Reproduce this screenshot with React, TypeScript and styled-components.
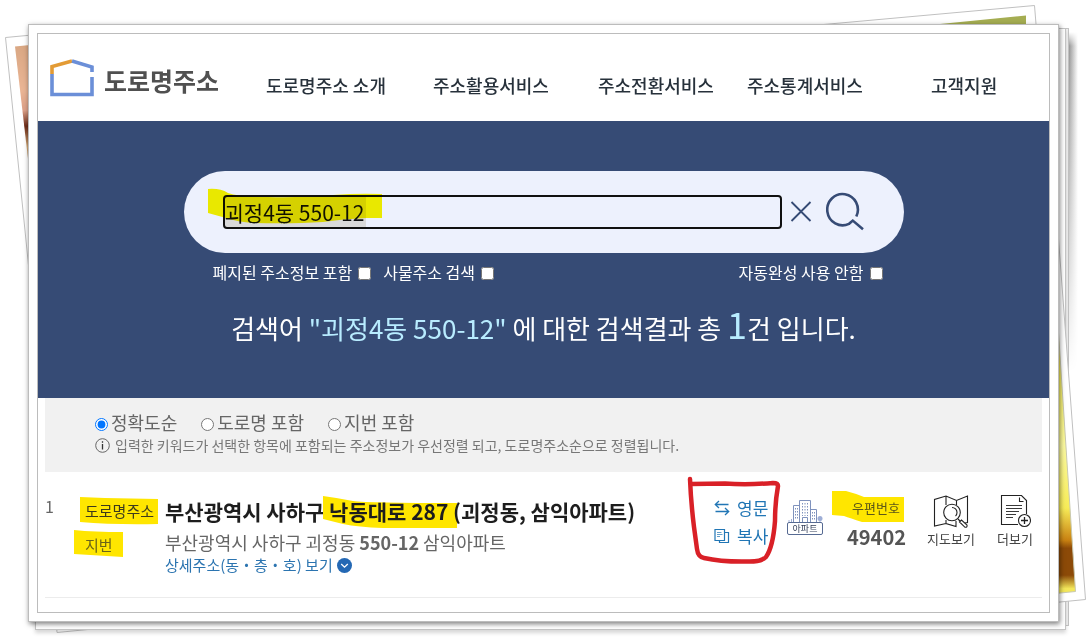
import React, { useState } from "react";
import styled, { createGlobalStyle } from "styled-components";

const GlobalStyle = createGlobalStyle`
  *, *::before, *::after { box-sizing: border-box; }
  body {
    margin: 0;
    background: #fff;
    font-family: "Noto Sans CJK KR", "Noto Sans", sans-serif;
    color: #222;
  }
  h1, p, ul { margin: 0; padding: 0; font-weight: 400; }
  button { font: inherit; color: inherit; border: 0; padding: 0; background: none; cursor: pointer; }
  a { color: inherit; text-decoration: none; }
`;

/* ---------- photo stack ---------- */

const Stage = styled.div`
  position: relative;
  isolation: isolate;
  overflow: hidden;
  padding: 24px 32px 16px 28px;
`;

const BackSheet = styled.div<{ $front?: boolean }>`
  position: absolute;
  z-index: -1;
  top: 28px;
  left: 35px;
  right: ${(p) => (p.$front ? 25 : 22)}px;
  bottom: ${(p) => (p.$front ? 8 : 12)}px;
  background: ${(p) => (p.$front ? "#fff" : "#f0f0f0")};
  border: 1px solid #c4c4c4;
  box-shadow: ${(p) => (p.$front ? "0 3px 4px rgba(0,0,0,.16)" : "none")};
`;

const Shade = styled.div`
  position: absolute;
  z-index: -1;
  top: 32px;
  right: 13px;
  width: 10px;
  height: 340px;
  background: linear-gradient(90deg, #8c8c8c, #fff);
  mask-image: linear-gradient(transparent, #000 14px, transparent);
`;

const Photo = styled.svg<{ $side: "left" | "right" }>`
  position: absolute;
  z-index: -1;
  top: 0;
  ${(p) => p.$side}: 0;
`;

const Frame = styled.div`
  padding: 8px;
  border: 1px solid #bcbcbc;
  background: #fff;
  box-shadow: 1px 2px 5px rgba(0, 0, 0, 0.5);
`;

const Page = styled.div`
  border: 1px solid #bcbcbc;
  padding-bottom: 14px;
`;

/* ---------- header ---------- */

const Header = styled.header`
  display: grid;
  grid-template-columns: 216px 1fr;
  height: 87px;
  padding-left: 12px;
`;

const Brand = styled.a`
  display: flex;
  gap: 9px;
  padding-top: 25px;
  font-size: 25px;
  font-weight: 700;
  line-height: 42px;
  color: #505050;
  white-space: nowrap;
`;

const Nav = styled.nav`
  display: grid;
  grid-template-columns: 167fr 165fr 149fr 184fr 118fr;
  padding-top: 39px;
  font-size: 18px;
  font-weight: 500;
  line-height: 25px;
  white-space: nowrap;
  color: #27313b;
`;

/* ---------- search ---------- */

const Hero = styled.section`
  display: flex;
  flex-direction: column;
  align-items: center;
  height: 277px;
  padding-top: 50px;
  background: #364b75;
  color: #fff;
`;

const SearchBar = styled.form`
  position: relative;
  isolation: isolate;
  display: flex;
  align-items: center;
  width: 720px;
  max-width: 100%;
  height: 82px;
  padding: 0 38px 0 39px;
  border-radius: 41px;
  background: #edf1fd;
  color: #364b75;
`;

const SearchInput = styled.input`
  flex: 1;
  min-width: 0;
  height: 34px;
  padding: 0;
  border: 2px solid #101010;
  border-radius: 4px;
  outline: 0;
  background: linear-gradient(#d9d9d9, #d9d9d9) 0 0 / 141px 100% no-repeat #edf1fd;
  font: 21px/30px "Noto Sans CJK KR", sans-serif;
  color: #111;
`;

const IconButton = styled.button<{ $gap: number }>`
  display: flex;
  margin-left: ${(p) => p.$gap}px;
`;

const Options = styled.div`
  display: flex;
  gap: 12px;
  width: 720px;
  max-width: 100%;
  padding: 7px 21px 0 29px;
  font-size: 16px;
  line-height: 24px;
  white-space: nowrap;
`;

const Check = styled.label<{ $end?: boolean }>`
  display: flex;
  align-items: center;
  gap: 6px;
  margin-left: ${(p) => (p.$end ? "auto" : "0")};
  input { margin: 2px 0 0; width: 13px; height: 13px; }
`;

const Summary = styled.h1`
  padding-top: 15px;
  font-size: 26px;
  line-height: 48px;
  white-space: nowrap;
  em { font-style: normal; color: #b8ecff; }
`;

const Count = styled.em`
  font-size: 36px;
`;

/* ---------- sorting ---------- */

const SortBand = styled.section`
  height: 74px;
  margin: 0 7px;
  padding: 13px 0 0 50px;
  background: #f1f1f1;
  color: #666;
  white-space: nowrap;
`;

const SortList = styled.div`
  display: flex;
  gap: 24px;
`;

const Radio = styled.label`
  display: flex;
  align-items: center;
  gap: 3px;
  font-size: 18px;
  line-height: 23px;
  input { margin: 3px 0 0; width: 13px; height: 13px; }
`;

const Hint = styled.p`
  display: flex;
  align-items: center;
  gap: 5px;
  font-size: 14px;
  line-height: 22px;
  color: #777;
`;

/* ---------- result row ---------- */

const Result = styled.article`
  display: grid;
  grid-template-columns: 40px 80px 1fr 73px 60px 80px 70px 45px;
  height: 126px;
  margin: 0 7px;
  padding-top: 22px;
  border-bottom: 1px solid #ececec;
  white-space: nowrap;
`;

const Index = styled.span`
  font-size: 16px;
  line-height: 24px;
  color: #666;
`;

const Labels = styled.div`
  padding-top: 2px;
  font-size: 15px;
  line-height: 30px;
  color: #3d3a1c;
  span { display: block; width: max-content; }
  span + span { margin-top: 4px; color: #6b6518; }
`;

const Address = styled.div`
  padding-top: 2px;
  color: #666;
`;

const Road = styled.p`
  font-size: 21px;
  font-weight: 700;
  line-height: 30px;
  color: #1d1d1d;
`;

const Lot = styled.p`
  padding-top: 4px;
  font-size: 18px;
  line-height: 24px;
`;

const Detail = styled.button`
  display: flex;
  align-items: center;
  gap: 4px;
  font-size: 15px;
  line-height: 22px;
  color: #2b74b0;
`;

const Marked = styled.span`
  position: relative;
  isolation: isolate;
`;

/* hand-drawn highlighter stroke lying under or over a word */
const Ink = styled.svg<{ $x: number; $y: number; $over?: boolean }>`
  position: absolute;
  left: ${(p) => p.$x}px;
  top: ${(p) => p.$y}px;
  z-index: ${(p) => (p.$over ? 1 : -1)};
  pointer-events: none;
  mix-blend-mode: multiply;
`;

const Actions = styled.div`
  position: relative;
  display: flex;
  flex-direction: column;
  align-items: flex-start;
  color: #2176b5;
`;

const Action = styled.button`
  display: flex;
  align-items: center;
  gap: 7px;
  font-size: 17px;
  line-height: 28px;
`;

const Building = styled.figure`
  display: flex;
  flex-direction: column;
  width: 36px;
  margin: 5px 0 0;
  svg { display: block; }
  figcaption {
    height: 13px;
    border: 1px solid #566a92;
    border-radius: 2px;
    font-size: 9px;
    line-height: 11px;
    text-align: center;
    color: #333e58;
  }
`;

const Zip = styled.div`
  width: 58px;
  padding-top: 4px;
  font-size: 13px;
  line-height: 20px;
  text-align: center;
  color: #5c5618;
  strong {
    display: block;
    padding-top: 6px;
    font-size: 20px;
    line-height: 26px;
    color: #555;
  }
`;

const Tool = styled.button`
  display: flex;
  flex-direction: column;
  align-items: center;
  align-self: start;
  justify-self: start;
  gap: 1px;
  font-size: 13px;
  line-height: 20px;
  color: #444;
`;

const LeftPhotos = () => (
  <Photo $side="left" width="200" height="638" viewBox="0 0 200 638" aria-hidden="true">
    <defs>
      <linearGradient id="skin" x1="0" y1="0" x2="0" y2="1">
        <stop offset="0" stopColor="#d9a783" />
        <stop offset=".35" stopColor="#eab595" />
        <stop offset=".5" stopColor="#dca088" />
        <stop offset=".62" stopColor="#6e2c18" />
        <stop offset=".78" stopColor="#d8ad78" />
        <stop offset="1" stopColor="#8a5f3c" />
      </linearGradient>
    </defs>
    <path d="M5.5 37.500L32 35V300Z" fill="#fff" stroke="#c0c0c0" />
    <path d="M15 46.500L30 45V176Z" fill="url(#skin)" />
    <path d="M56 618L57 632.500L175 621" fill="#fff" stroke="#c0c0c0" />
  </Photo>
);

const RightPhotos = () => (
  <Photo $side="right" width="291" height="638" viewBox="800 0 291 638" aria-hidden="true">
    <defs>
      <linearGradient id="glow" x1="0" y1="0" x2="0" y2="1">
        <stop offset="0" stopColor="#f0d038" />
        <stop offset=".2" stopColor="#f5ee60" />
        <stop offset=".45" stopColor="#fbf9a0" />
        <stop offset=".68" stopColor="#f7ec58" />
        <stop offset=".8" stopColor="#c98212" />
        <stop offset=".83" stopColor="#8c4a08" />
        <stop offset=".93" stopColor="#8c4a08" />
        <stop offset=".98" stopColor="#f3e75a" />
      </linearGradient>
    </defs>
    <path d="M818 25L1034.500 5.500L1036.500 30" fill="#fff" stroke="#c0c0c0" />
    <path d="M930 25L1026 15.500V30H930Z" fill="#a5ad52" />
    <path d="M1058 232L1085.500 599.500L1050 603" fill="#fff" stroke="#c0c0c0" />
    <path d="M1058 325L1075.500 591.500L1050 594Z" fill="url(#glow)" stroke="#c9c9b0" />
  </Photo>
);

const HIGHLIGHT = "#ffe600";

export default function App() {
  const [query, setQuery] = useState("괴정4동 550-12");
  const [sort, setSort] = useState("정확도순");

  return (
    <>
      <GlobalStyle />
      <Stage>
        <LeftPhotos />
        <Shade />
        <BackSheet />
        <BackSheet $front />
        <RightPhotos />
        <Frame>
          <Page>
            <Header>
              <Brand href="#">
                <svg width="45" height="38" viewBox="0 0 45 38" fill="none" strokeWidth="3.6" aria-hidden="true">
                  <path d="M2 15V7.500L22 2" stroke="#e39b35" />
                  <path d="M22 2L42 8V13M42 18V35.500H2V15" stroke="#6b8fd8" />
                </svg>
                도로명주소
              </Brand>
              <Nav>
                <a href="#">도로명주소 소개</a>
                <a href="#">주소활용서비스</a>
                <a href="#">주소전환서비스</a>
                <a href="#">주소통계서비스</a>
                <a href="#">고객지원</a>
              </Nav>
            </Header>

            <Hero>
              <SearchBar onSubmit={(e) => e.preventDefault()}>
                <SearchInput aria-label="주소 검색" value={query} onChange={(e) => setQuery(e.target.value)} />
                <Ink $x={24} $y={17} $over width="175" height="36" viewBox="0 0 175 36" aria-hidden="true">
                  <path
                    d="M0 1Q12 0 20 5Q32 9 60 9Q90 10 125 7Q150 5 174 6V30H158Q135 31 115 34Q85 36 45 35Q30 34 18 30L0 25Z"
                    fill="#fbf600"
                  />
                </Ink>
                <IconButton $gap={8} type="button" aria-label="지우기" onClick={() => setQuery("")}>
                  <svg width="22" height="22" viewBox="0 0 22 22" stroke="#364b75" strokeWidth="1.800">
                    <path d="M1.500 1L20.500 20M20.500 1L1.500 20" />
                  </svg>
                </IconButton>
                <IconButton $gap={14} aria-label="검색">
                  <svg width="40" height="40" viewBox="0 0 40 40" fill="none" stroke="#364b75" strokeWidth="2.600">
                    <path d="M30.300 24.500A15.300 15.600 0 1 0 23 31.800L26.800 28.600L37 37.200" />
                  </svg>
                </IconButton>
              </SearchBar>
              <Options>
                <Check>
                  폐지된 주소정보 포함 <input type="checkbox" />
                </Check>
                <Check>
                  사물주소 검색 <input type="checkbox" />
                </Check>
                <Check $end>
                  자동완성 사용 안함 <input type="checkbox" />
                </Check>
              </Options>
              <Summary>
                검색어 <em>"괴정4동 550-12"</em> 에 대한 검색결과 총 <Count>1</Count>건 입니다.
              </Summary>
            </Hero>

            <SortBand>
              <SortList role="radiogroup" aria-label="정렬">
                {["정확도순", "도로명 포함", "지번 포함"].map((name) => (
                  <Radio key={name}>
                    <input type="radio" name="sort" checked={sort === name} onChange={() => setSort(name)} />
                    {name}
                  </Radio>
                ))}
              </SortList>
              <Hint>
                <svg width="15" height="15" viewBox="0 0 15 15" fill="none" stroke="#666" aria-hidden="true">
                  <circle cx="7.500" cy="7.500" r="6.800" />
                  <path d="M7.500 6V11.500M7.500 3.300V4.800" stroke="#333" strokeWidth="1.300" />
                </svg>
                입력한 키워드가 선택한 항목에 포함되는 주소정보가 우선정렬 되고, 도로명주소순으로 정렬됩니다.
              </Hint>
            </SortBand>

            <Result>
              <Index>1</Index>
              <Labels>
                <Marked>
                  도로명주소
                  <Ink $x={-5} $y={0} width="79" height="29" viewBox="0 0 79 29" aria-hidden="true">
                    <path d="M0 1L25 2L78 3L78 28Q35 29 0 26Z" fill={HIGHLIGHT} />
                  </Ink>
                </Marked>
                <Marked>
                  지번
                  <Ink $x={-11} $y={0} width="50" height="27" viewBox="0 0 50 27" aria-hidden="true">
                    <path d="M0 0Q20 2 49 2V27L0 24Z" fill={HIGHLIGHT} />
                  </Ink>
                </Marked>
              </Labels>
              <Address>
                <Road>
                  부산광역시 사하구{" "}
                  <Marked>
                    낙동대로 287 (
                    <Ink $x={-6} $y={0} width="135" height="32" viewBox="0 0 135 32" aria-hidden="true">
                      <path d="M0 0Q15 2 30 5Q45 7 134 7V32H60Q35 31 20 28L0 23Z" fill={HIGHLIGHT} />
                    </Ink>
                  </Marked>
                  괴정동, 삼익아파트)
                </Road>
                <Lot>
                  부산광역시 사하구 괴정동 <b>550-12</b> 삼익아파트
                </Lot>
                <Detail>
                  상세주소(동・층・호) 보기
                  <svg width="15" height="15" viewBox="0 0 15 15" aria-hidden="true">
                    <circle cx="7.500" cy="7.500" r="7.500" fill="#2468b4" />
                    <path d="M4.200 6L7.500 9.200L10.800 6" fill="none" stroke="#fff" strokeWidth="1.300" />
                  </svg>
                </Detail>
              </Address>
              <Actions>
                <Action>
                  <svg width="16" height="16" viewBox="0 0 16 16" fill="none" stroke="#2176b5" strokeWidth="1.300" aria-hidden="true">
                    <path d="M14.500 4.500H1.500M5 1L1.300 4.500L5 8M1.500 11.500H14.500M11 8L14.700 11.500L11 15" />
                  </svg>
                  영문
                </Action>
                <Action>
                  <svg width="16" height="16" viewBox="0 0 16 16" fill="none" stroke="#2176b5" strokeWidth="1.200" aria-hidden="true">
                    <path d="M1 1.500H10.500V12.500H1ZM10.500 4.500H14.500V14.500H5.500V12.500" />
                    <path d="M3 4.500H7.500M3 6.500H8.500M3 8.500H6" strokeWidth=".7" />
                  </svg>
                  복사
                </Action>
                <Ink $x={-27} $y={-19} $over width="94" height="90" viewBox="0 0 94 90" aria-hidden="true">
                  <path
                    d="M3 4Q4 28 7 52L10 74Q11 82 17 83Q35 87 60 86.500Q74 87 79 82Q86 72 88 46Q88 28 91 11Q91 8 86 8Q60 10 38 8.500L4 9"
                    fill="none"
                    stroke="#d92027"
                    strokeWidth="4.500"
                    strokeLinecap="round"
                    strokeLinejoin="round"
                  />
                </Ink>
              </Actions>
              <Building>
                <svg width="36" height="23" viewBox="0 0 36 23" fill="none" stroke="#7f92bd" aria-hidden="true">
                  <path d="M6.500 23V6.500H12.500M12.500 23V1.500H23.500V23M23.500 10.500H29.500V23M15.500 23V18.500H20.500V23" />
                  <path d="M15.500 4V17M18 4V17M20.500 4V17M8.500 9V21M10.500 9V21M25.500 13V21M27.500 13V21" strokeDasharray="1.500 1.500" />
                  <path d="M33 20V23M2 21V23M4.500 20V23" stroke="#9eaed6" />
                  <circle cx="33" cy="19.500" r="2.500" fill="#9eaed6" stroke="none" />
                </svg>
                <figcaption>아파트</figcaption>
              </Building>
              <Zip>
                <Marked>
                  우편번호
                  <Ink $x={-20} $y={-7} width="73" height="32" viewBox="0 0 73 32" aria-hidden="true">
                    <path d="M0 0H14Q22 2 32 6L72 6V31H30Q18 27 12 25L0 24Z" fill={HIGHLIGHT} />
                  </Ink>
                </Marked>
                <strong>49402</strong>
              </Zip>
              <Tool>
                <svg width="36" height="34" viewBox="0 0 36 34" fill="none" stroke="#222" strokeWidth="1.100" aria-hidden="true">
                  <path d="M13 29.500L1.500 32V5.500L13 2L23.500 6.500L34.500 2V28.500L32 29M13 2V11M13 26V29.500L23 32.500V27M23.500 6.500V11" />
                  <circle cx="19" cy="18.500" r="8.300" />
                  <path d="M19 13.500A5 5 0 0 1 24 18.500Q24 21 22.500 22M25 25L27.500 27.500M26.500 28L28.500 26L34 31Q34.500 33.500 32 33.300Z" />
                </svg>
                지도보기
              </Tool>
              <Tool>
                <svg width="32" height="34" viewBox="0 0 32 34" fill="none" stroke="#222" strokeWidth="1.100" aria-hidden="true">
                  <path d="M19 30.500H2.500V1.500H22.500L27.500 6.500V20M20.500 3.500V7.500H24.500" />
                  <path d="M7 11.500H23M7 14.500H23M7 17.500H20M7 20.500H17M7 23.500H14" strokeWidth=".9" />
                  <circle cx="25.500" cy="26.500" r="6" />
                  <path d="M25.500 23V30M22 26.500H29" strokeWidth="1.300" />
                </svg>
                더보기
              </Tool>
            </Result>
          </Page>
        </Frame>
      </Stage>
    </>
  );
}
